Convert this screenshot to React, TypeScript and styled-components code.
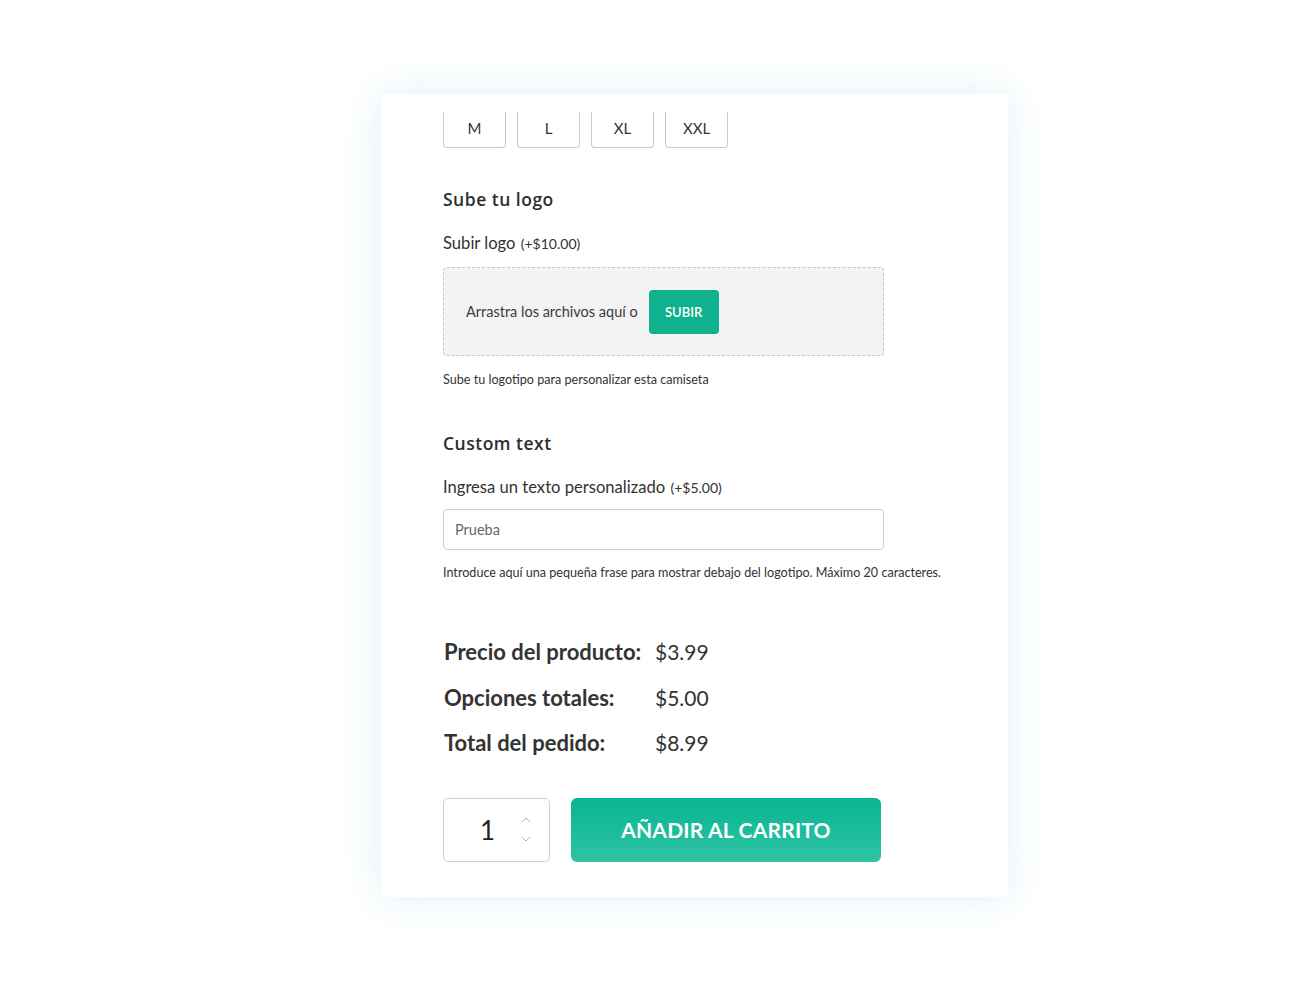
import React, { useState } from 'react';
import styled, { createGlobalStyle } from 'styled-components';

const GlobalStyle = createGlobalStyle`
  html, body {
    margin: 0;
    padding: 0;
    background: #ffffff;
  }
  body {
    font-family: Lato, "Noto Sans", sans-serif;
    color: #333333;
  }
`;

const SIZES = ['M', 'L', 'XL', 'XXL'];

const PRICES = [
  { label: 'Precio del producto:', value: '$3.99' },
  { label: 'Opciones totales:', value: '$5.00' },
  { label: 'Total del pedido:', value: '$8.99' },
];

const App = () => {
  const [size, setSize] = useState('');
  const [text, setText] = useState('Prueba');
  const [qty, setQty] = useState(1);

  return (
    <StyledPage>
      <GlobalStyle />
      <Card>
        <SizeRow>
          {SIZES.map((s) => (
            <SizeButton key={s} $active={size === s} onClick={() => setSize(s)}>
              {s}
            </SizeButton>
          ))}
        </SizeRow>

        <Section $top={39}>
          <Heading>Sube tu logo</Heading>
          <FieldLabel>
            Subir logo <small>(+$10.00)</small>
          </FieldLabel>
          <DropZone>
            <span>Arrastra los archivos aquí o</span>
            <UploadButton>SUBIR</UploadButton>
          </DropZone>
          <HelpText $top={16}>Sube tu logotipo para personalizar esta camiseta</HelpText>
        </Section>

        <Section $top={43}>
          <Heading>Custom text</Heading>
          <FieldLabel>
            Ingresa un texto personalizado <small>(+$5.00)</small>
          </FieldLabel>
          <TextInput value={text} onChange={(e) => setText(e.target.value)} />
          <HelpText $top={15}>
            Introduce aquí una pequeña frase para mostrar debajo del logotipo. Máximo 20 caracteres.
          </HelpText>
        </Section>

        <PriceTable>
          {PRICES.map((p) => (
            <React.Fragment key={p.label}>
              <dt>{p.label}</dt>
              <dd>{p.value}</dd>
            </React.Fragment>
          ))}
        </PriceTable>

        <CartRow>
          <QtyBox>
            <span>{qty}</span>
            <Spinner>
              <button onClick={() => setQty(qty + 1)} aria-label="más">
                <svg width="10" height="6" viewBox="0 0 10 6">
                  <path d="M1 5 L5 1 L9 5" fill="none" stroke="#b0b0b0" strokeWidth="1" />
                </svg>
              </button>
              <button onClick={() => setQty(Math.max(1, qty - 1))} aria-label="menos">
                <svg width="10" height="6" viewBox="0 0 10 6">
                  <path d="M1 1 L5 5 L9 1" fill="none" stroke="#b0b0b0" strokeWidth="1" />
                </svg>
              </button>
            </Spinner>
          </QtyBox>
          <CartButton>AÑADIR AL CARRITO</CartButton>
        </CartRow>
      </Card>
    </StyledPage>
  );
};

const StyledPage = styled.div`
  width: 1300px;
  height: 1006px;
  padding: 94px 0 0 381px;
  box-sizing: border-box;
`;

const Card = styled.div`
  width: 627px;
  height: 803px;
  box-sizing: border-box;
  padding: 18px 62px 36px;
  background: #fff;
  box-shadow: 0 0 38px rgba(160, 215, 232, 0.35);
`;

const SizeRow = styled.div`
  display: flex;
  gap: 11px;
`;

const SizeButton = styled.button<{ $active?: boolean }>`
  width: 63px;
  height: 36px;
  background: #fff;
  border: 1px solid ${(p) => (p.$active ? '#10b592' : '#c9c9c9')};
  border-top: none;
  border-radius: 0 0 4px 4px;
  font-family: Lato, sans-serif;
  font-size: 15px;
  color: #333;
  cursor: pointer;
  padding: 0 0 4px;
`;

const Section = styled.div<{ $top: number }>`
  margin-top: ${(p) => p.$top}px;
  display: flex;
  flex-direction: column;
`;

const Heading = styled.h3`
  margin: 0;
  font-family: "Open Sans", sans-serif;
  font-weight: 600;
  font-size: 17.5px;
  letter-spacing: 0.5px;
  line-height: 24px;
  color: #2e2e2e;
`;

const FieldLabel = styled.label`
  margin-top: 20px;
  font-size: 16.6px;
  line-height: 24px;
  height: 24px;
  color: #333;

  small {
    font-size: 14px;
    margin-left: 1px;
  }
`;

const DropZone = styled.div`
  margin-top: 12px;
  width: 441px;
  height: 89px;
  box-sizing: border-box;
  background: #f3f3f3;
  border: 1px dashed #c8c8c8;
  border-radius: 4px;
  display: flex;
  align-items: center;
  gap: 11px;
  padding-left: 22px;
  font-size: 14.5px;
  color: #3a3a3a;
`;

const UploadButton = styled.button`
  width: 70px;
  height: 44px;
  border: none;
  border-radius: 4px;
  background: #0fb18f;
  color: #fff;
  font-family: Lato, sans-serif;
  font-size: 13px;
  font-weight: 600;
  cursor: pointer;
`;

const HelpText = styled.p<{ $top: number }>`
  margin: ${(p) => p.$top}px 0 0;
  font-size: 12.6px;
  line-height: 16px;
  color: #333;
`;

const TextInput = styled.input`
  margin-top: 10px;
  width: 441px;
  height: 41px;
  box-sizing: border-box;
  border: 1px solid #cfcfcf;
  border-radius: 4px;
  padding: 0 11px;
  font-family: Lato, sans-serif;
  font-size: 14.5px;
  color: #666;
  outline: none;
`;

const PriceTable = styled.dl`
  margin: 48px 0 0;
  display: grid;
  grid-template-columns: 212px auto;
  grid-auto-rows: 45.5px;
  align-items: center;

  dt {
    font-weight: 700;
    font-size: 22px;
    color: #333;
    padding-left: 1px;
  }
  dd {
    margin: 0;
    font-size: 21px;
    color: #333;
  }
`;

const CartRow = styled.div`
  margin-top: 32px;
  display: flex;
  gap: 21px;
`;

const QtyBox = styled.div`
  width: 107px;
  height: 64px;
  box-sizing: border-box;
  border: 1px solid #cfcfcf;
  border-radius: 5px;
  display: flex;
  align-items: center;
  padding-left: 36px;

  span {
    width: 41px;
    font-size: 26px;
    color: #222;
  }
`;

const Spinner = styled.div`
  display: flex;
  flex-direction: column;
  gap: 13px;

  button {
    border: none;
    background: none;
    padding: 0;
    line-height: 0;
    cursor: pointer;
  }
`;

const CartButton = styled.button`
  width: 310px;
  height: 64px;
  border: none;
  border-radius: 6px;
  background: linear-gradient(180deg, #08b491 0%, #2fc4a6 100%);
  color: #fff;
  font-family: Lato, sans-serif;
  font-weight: 700;
  font-size: 21px;
  letter-spacing: 0.2px;
  cursor: pointer;
`;

export default App;
